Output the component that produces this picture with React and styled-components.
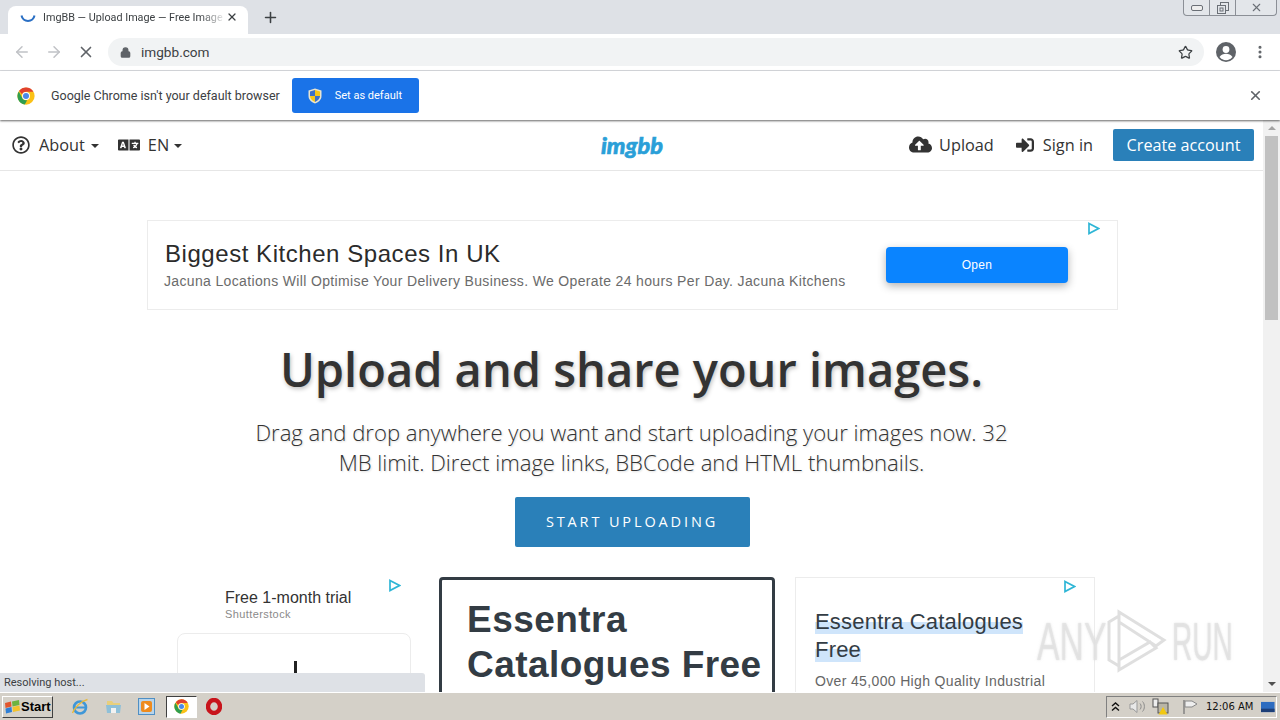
import React from "react";
import styled, { createGlobalStyle } from "styled-components";
import { FaRegQuestionCircle, FaLanguage, FaCloudUploadAlt, FaSignInAlt } from "react-icons/fa";
import { ArrowLeft, ArrowRight, X, Plus, Star, MoreVertical, Lock } from "lucide-react";

const GlobalStyle = createGlobalStyle`
  html, body { margin: 0; padding: 0; height: 720px; overflow: hidden; background: #fff; }
  * { box-sizing: border-box; }
  body { font-family: "Open Sans", sans-serif; color: #333; }
`;

const Screen = styled.div`
  position: relative;
  width: 1280px;
  height: 720px;
  display: flex;
  flex-direction: column;
  overflow: hidden;
`;

const TabStrip = styled.div`
  height: 34px;
  flex: none;
  background: #dee1e6;
  display: flex;
  align-items: flex-end;
  padding-left: 8px;
`;

const Tab = styled.div`
  width: 240px;
  height: 28px;
  background: #fff;
  border-radius: 8px 8px 0 0;
  display: flex;
  align-items: center;
  padding: 0 10px 6px 12px;
  color: #3c4043;
  font: 10.8px "Roboto", sans-serif;
`;

const TabTitle = styled.span`
  flex: 1;
  margin-left: 7px;
  white-space: nowrap;
  overflow: hidden;
  -webkit-mask-image: linear-gradient(to right, #000 86%, transparent);
  mask-image: linear-gradient(to right, #000 86%, transparent);
`;

const NewTab = styled.div`
  margin: 0 0 4px 14px;
  height: 26px;
  display: flex;
  align-items: center;
  color: #3c4043;
`;

const WindowControls = styled.div`
  margin: 0 3px 18px auto;
  align-self: flex-start;
  width: 94px;
  height: 16px;
  display: flex;
  border: 1px solid #8b8f96;
  border-top: none;
  border-radius: 0 0 4px 4px;
  background: #e3e6ea;
`;

const WindowButton = styled.div`
  flex: ${(p) => p.$grow || 1};
  display: flex;
  align-items: center;
  justify-content: center;
  border-left: ${(p) => (p.$first ? "none" : "1px solid #8b8f96")};
  color: #6a6f76;
`;

const Toolbar = styled.div`
  height: 37px;
  flex: none;
  background: #fff;
  border-bottom: 1px solid #dadce0;
  display: flex;
  align-items: center;
  padding: 0 12px 0 13px;
`;

const NavIcon = styled.div`
  width: ${(p) => p.$w || 32}px;
  display: flex;
  color: ${(p) => p.$color || "#c0c2c6"};
`;

const Omnibox = styled.div`
  flex: 1;
  height: 28px;
  margin-left: 5px;
  background: #f1f3f4;
  border-radius: 14px;
  display: flex;
  align-items: center;
  padding: 0 11px 0 12px;
  font: 13.6px "Roboto", sans-serif;
  color: #3c4043;
`;

const UrlText = styled.span`
  flex: 1;
  margin-left: 10px;
`;

const ToolbarRight = styled.div`
  display: flex;
  align-items: center;
  gap: 16px;
  margin-left: 12px;
  color: #5f6368;
`;

const InfoBar = styled.div`
  height: 49px;
  flex: none;
  background: #fff;
  display: flex;
  align-items: center;
  padding: 0 17px 0 17px;
  position: relative;
  z-index: 2;
  box-shadow: 0 1px 2px rgba(0, 0, 0, 0.6);
`;

const InfoText = styled.span`
  margin-left: 16px;
  font: 12.5px "Roboto", sans-serif;
  color: #3c4043;
  white-space: nowrap;
`;

const DefaultButton = styled.div`
  margin-left: 12px;
  width: 127px;
  height: 35px;
  background: #1a73e8;
  border-radius: 3px;
  display: flex;
  align-items: center;
  padding-left: 16px;
  gap: 13px;
  color: #fff;
  font: 11px "Roboto", sans-serif;
`;

const InfoClose = styled.div`
  margin-left: auto;
  display: flex;
  color: #5f6368;
`;

const Viewport = styled.div`
  flex: 1;
  min-height: 0;
  display: flex;
  overflow: hidden;
`;

const Page = styled.div`
  flex: 1;
  min-width: 0;
  overflow: hidden;
  display: flex;
  flex-direction: column;
  align-items: center;
`;

const TopBar = styled.div`
  width: 100%;
  height: 51px;
  flex: none;
  border-bottom: 1px solid #e6e6e6;
  display: grid;
  grid-template-columns: 1fr auto 1fr;
  align-items: center;
  padding: 0 9px 1px 12px;
`;

const BarGroup = styled.div`
  display: flex;
  align-items: center;
  gap: ${(p) => p.$gap}px;
  justify-content: ${(p) => (p.$end ? "flex-end" : "flex-start")};
`;

const BarItem = styled.div`
  display: flex;
  align-items: center;
  gap: ${(p) => p.$gap || 9}px;
  font-size: 16.3px;
  color: #333;
  white-space: nowrap;
`;

const Caret = styled.span`
  width: 0;
  height: 0;
  margin-left: -3px;
  margin-top: 2px;
  border-left: 4px solid transparent;
  border-right: 4px solid transparent;
  border-top: 4px solid #333;
`;

const Logo = styled.div`
  font: italic 900 23.5px "Lato", sans-serif;
  -webkit-text-stroke: 0.6px #2a9fd8;
  color: #2a9fd8;
  margin-left: -2px;
`;

const AccountButton = styled.div`
  width: 141px;
  height: 32px;
  margin-left: -2px;
  background: #2a80b9;
  border-radius: 2px;
  color: #fff;
  font-size: 16.2px;
  display: flex;
  align-items: center;
  justify-content: center;
`;

const Banner = styled.div`
  position: relative;
  width: 971px;
  height: 90px;
  flex: none;
  margin: 49px 0 0 2px;
  border: 1px solid #ececec;
  display: flex;
  align-items: center;
  padding: 0 49px 0 16px;
  font-family: "Liberation Sans", sans-serif;
`;

const BannerText = styled.div`
  flex: 1;
  min-width: 0;
  margin-top: -2px;
`;

const BannerTitle = styled.div`
  font-size: 24px;
  line-height: 30px;
  color: #2b2b2b;
  letter-spacing: 0.55px;
  margin-left: 1px;
`;

const BannerLine = styled.div`
  margin-top: 3px;
  font-size: 14px;
  line-height: 18px;
  color: #6b6b6b;
  letter-spacing: 0.35px;
  white-space: nowrap;
`;

const OpenButton = styled.div`
  width: 182px;
  height: 36px;
  background: #0a84ff;
  border-radius: 4px;
  color: #fff;
  font-size: 12px;
  letter-spacing: 0.3px;
  display: flex;
  align-items: center;
  justify-content: center;
  box-shadow: 0 3px 8px rgba(0, 0, 0, 0.3);
`;

const AdMark = styled.svg`
  position: absolute;
  top: ${(p) => p.$top}px;
  right: ${(p) => p.$right}px;
`;

const Headline = styled.h1`
  margin: 31px 0 0;
  font-size: 47px;
  line-height: 56px;
  font-weight: 600;
  color: #333;
  white-space: nowrap;
  text-shadow: 1px 2px 4px rgba(0, 0, 0, 0.25);
`;

const Lead = styled.p`
  margin: 20px 0 0;
  width: 770px;
  text-align: center;
  font-size: 22.1px;
  line-height: 30px;
  font-weight: 300;
  color: #333;
  text-shadow: 1px 1px 2px rgba(0, 0, 0, 0.15);
`;

const StartButton = styled.div`
  width: 235px;
  height: 50px;
  flex: none;
  margin: 20px 0 0 1px;
  padding-bottom: 2px;
  background: #2a80b9;
  border-radius: 2px;
  color: #fff;
  font-size: 14.5px;
  letter-spacing: 2.87px;
  display: flex;
  align-items: center;
  justify-content: center;
`;

const AdRow = styled.div`
  margin-top: 30px;
  align-self: flex-start;
  margin-left: 177px;
  display: flex;
  font-family: "Liberation Sans", sans-serif;
`;

const SideAd = styled.div`
  position: relative;
  width: 234px;
  padding-top: 11px;
`;

const TrialTitle = styled.div`
  margin-left: 48px;
  font-size: 16px;
  line-height: 19px;
  color: #333;
`;

const TrialBrand = styled.div`
  margin-left: 48px;
  font-size: 11px;
  line-height: 14px;
  color: #8a8a8a;
  letter-spacing: 0.4px;
`;

const TrialCard = styled.div`
  margin-top: 12px;
  height: 60px;
  border: 1px solid #ececec;
  border-radius: 8px 8px 0 0;
  display: flex;
  justify-content: center;
  padding: 27px 0 0 3px;
`;

const TrialTick = styled.span`
  width: 3px;
  height: 14px;
  background: #222;
`;

const CenterAd = styled.div`
  width: 336px;
  height: 140px;
  margin-left: 28px;
  border: 3px solid #333c44;
  border-radius: 4px;
  padding: 17px 0 0 25px;
  font-size: 37px;
  line-height: 45px;
  font-weight: 700;
  color: #333c44;
  letter-spacing: 0.45px;
`;

const RightAd = styled.div`
  position: relative;
  width: 300px;
  height: 140px;
  margin-left: 20px;
  border: 1px solid #ececec;
  padding: 30px 0 0 19px;
`;

const RightTitle = styled.div`
  width: 230px;
  font-size: 22px;
  line-height: 28px;
  color: #333c44;
  letter-spacing: 0.2px;
`;

const Highlight = styled.span`
  background: linear-gradient(to bottom, transparent 50%, #cfe5fb 50%);
`;

const RightLine = styled.div`
  margin-top: 8px;
  font-size: 14px;
  line-height: 18px;
  color: #666;
  letter-spacing: 0.35px;
  white-space: nowrap;
`;

const Scrollbar = styled.div`
  width: 17px;
  flex: none;
  background: #f1f1f1;
  display: flex;
  flex-direction: column;
  align-items: center;
`;

const ScrollArrow = styled.div`
  height: 16px;
  flex: none;
  display: flex;
  align-items: center;
  justify-content: center;
`;

const Thumb = styled.div`
  width: 13px;
  height: 184px;
  background: #c1c1c1;
`;

const ScrollGap = styled.div`
  flex: 1;
`;

const Triangle = styled.span`
  width: 0;
  height: 0;
  border-left: 4px solid transparent;
  border-right: 4px solid transparent;
  ${(p) => (p.$up ? "border-bottom: 4px solid #a3a3a3;" : "border-top: 4px solid #505050;")}
`;

const StatusBubble = styled.div`
  position: absolute;
  left: 0;
  bottom: 28px;
  width: 425px;
  height: 19px;
  background: #dee1e6;
  border-radius: 0 3px 0 0;
  padding-left: 4px;
  font: 11px/20px "Roboto", sans-serif;
  color: #3c4043;
  z-index: 3;
`;

const Watermark = styled.div`
  position: absolute;
  left: 1037px;
  top: 608px;
  height: 66px;
  display: flex;
  align-items: center;
  gap: 4px;
  color: rgba(226, 226, 226, 0.75);
  font: 400 54px/1 "Liberation Sans", sans-serif;
  text-shadow: 0 0 3px rgba(205, 205, 205, 0.6);
  z-index: 2;
`;

const WatermarkWord = styled.span`
  display: inline-block;
  transform: scaleX(${(p) => p.$scale});
  transform-origin: left;
  width: ${(p) => p.$w}px;
  white-space: nowrap;
`;

const Taskbar = styled.div`
  height: 28px;
  flex: none;
  background: #d4d0c8;
  border-top: 1px solid #fff;
  display: flex;
  align-items: center;
  padding: 0 3px 0 2px;
  position: relative;
  z-index: 4;
`;

const StartBtn = styled.div`
  width: 51px;
  height: 22px;
  background: #d4d0c8;
  border: 1px solid;
  border-color: #fff #404040 #404040 #fff;
  display: flex;
  align-items: center;
  padding-left: 1px;
  gap: 0;
  font: 700 13px "Liberation Sans", sans-serif;
  color: #000;
`;

const TaskIcons = styled.div`
  display: flex;
  align-items: center;
  margin-left: 18px;
  gap: 16px;
`;

const ActiveTask = styled.div`
  width: 31px;
  height: 22px;
  margin: 0 -7px 0 -5px;
  background: #fff;
  border: 1px solid;
  border-color: #404040 #fff #fff #404040;
  display: flex;
  align-items: center;
  justify-content: center;
`;

const Tray = styled.div`
  margin-left: auto;
  width: 171px;
  height: 22px;
  border: 1px solid;
  border-color: #808080 #fff #fff #808080;
  display: flex;
  align-items: center;
  padding: 0 1px 0 4px;
  font: 11px "Liberation Sans", sans-serif;
  color: #111;
`;

const TrayClock = styled.span`
  margin-left: 7px;
  white-space: nowrap;
  font-family: "DejaVu Sans", sans-serif;
  font-size: 10px;
`;

const ChromeLogo = ({ size = 18 }) => (
  <svg width={size} height={size} viewBox="0 0 48 48">
    <circle cx="24" cy="24" r="23" fill="#fbc116" />
    <path d="M24 1a23 23 0 0 1 19.9 11.5H24a11.5 11.5 0 0 0-10.6 7L5.6 10.2A23 23 0 0 1 24 1z" fill="#e0412f" />
    <path d="M4.6 12 14.5 30A11.5 11.5 0 0 0 27 35l-6.2 11.8A23 23 0 0 1 4.6 12z" fill="#2f9e4f" />
    <circle cx="24" cy="24" r="10.5" fill="#fff" />
    <circle cx="24" cy="24" r="8" fill="#4a89e8" />
  </svg>
);

const Spinner = () => (
  <svg width="16" height="16" viewBox="0 0 16 16">
    <path d="M1.5 6.5A6.6 6.6 0 0 0 14.5 6.5" fill="none" stroke="#2a6fc4" strokeWidth="2" />
  </svg>
);

const Shield = () => (
  <svg width="14" height="16" viewBox="0 0 14 16">
    <path d="M7 .5 13.5 2.5V8c0 4-3.5 6.5-6.5 7.5C4 14.5.5 12 .5 8V2.5Z" fill="#e8e4d0" />
    <path d="M7 2 12 3.5V8H7Z" fill="#f5c518" />
    <path d="M7 2 2 3.5V8H7Z" fill="#3b6fc9" />
    <path d="M7 8H12C12 11 9 13 7 14Z" fill="#3b6fc9" />
    <path d="M7 8H2C2 11 5 13 7 14Z" fill="#f5c518" />
  </svg>
);

const Account = () => (
  <svg width="20" height="20" viewBox="0 0 20 20">
    <circle cx="10" cy="10" r="10" fill="#5f6368" />
    <circle cx="10" cy="7.5" r="3.4" fill="#fff" />
    <path d="M3.5 15c1.5-2.5 4-3.3 6.5-3.3s5 .8 6.5 3.3a8.2 8.2 0 0 1-13 0Z" fill="#fff" />
  </svg>
);

const WinFlag = () => (
  <svg width="17" height="16" viewBox="0 0 17 16">
    <path d="M1 4 7 2.5 7.5 7.5 1.5 9Z" fill="#e2562d" />
    <path d="M8 2.5 15 1 15.5 6 8.5 7.5Z" fill="#6cb33f" />
    <path d="M1.5 9.5 7.5 8 8 13 2 14.5Z" fill="#2f7fd6" />
    <path d="M8.5 8 15.5 6.5 16 11.5 9 13Z" fill="#f3c22b" />
  </svg>
);

const IeIcon = () => (
  <svg width="18" height="18" viewBox="0 0 18 18">
    <circle cx="9" cy="9.5" r="6" fill="none" stroke="#3f97d8" strokeWidth="2.6" />
    <path d="M3 9.5H15" stroke="#3f97d8" strokeWidth="2" />
    <path d="M1.5 15C3 10 10 3 16.5 1.5" fill="none" stroke="#e9b93a" strokeWidth="1.3" />
  </svg>
);

const FolderIcon = () => (
  <svg width="17" height="17" viewBox="0 0 17 17">
    <path d="M2 3H7L8.5 5H15V15H2Z" fill="#e8cf7c" />
    <path d="M1 7H16L15 15H2Z" fill="#8fc0d8" />
    <path d="M6 10H11V15H6Z" fill="#f2f2f2" />
  </svg>
);

const MediaIcon = () => (
  <svg width="17" height="17" viewBox="0 0 17 17">
    <rect x="0.5" y="0.5" width="16" height="16" fill="#b8d4ea" stroke="#4f8fc4" />
    <rect x="3" y="3" width="11" height="11" rx="2" fill="#ee8b1d" />
    <path d="M6.5 5 11.5 8.5 6.5 12Z" fill="#fff" />
  </svg>
);

const OperaIcon = () => (
  <svg width="16" height="17" viewBox="0 0 16 17">
    <ellipse cx="8" cy="8.5" rx="6" ry="6.5" fill="none" stroke="#c8141c" strokeWidth="4.4" />
  </svg>
);

const TrayIcon = styled.svg`
  margin-left: ${(p) => p.$left || 0}px;
  flex: none;
`;

const TrayIcons = () => (
  <>
    <TrayIcon width="9" height="11" viewBox="0 0 9 11">
      <path d="M1 5 4.5 2 8 5M1 9.5 4.5 6.5 8 9.5" fill="none" stroke="#111" strokeWidth="1.4" />
    </TrayIcon>
    <TrayIcon $left={9} width="17" height="15" viewBox="0 0 17 15">
      <path d="M1 5H4L8 1.5V13.5L4 10H1Z" fill="#e8e8e8" stroke="#999" />
      <path d="M11 4.5C12.5 6 12.5 9 11 10.5M13.5 2.5C16 5 16 10 13.5 12.5" fill="none" stroke="#8a8a8a" />
    </TrayIcon>
    <TrayIcon $left={6} width="17" height="17" viewBox="0 0 17 17">
      <rect x="1" y="1" width="5" height="8" fill="#eee" stroke="#555" />
      <rect x="6" y="5" width="10" height="10" fill="#b9b5a6" stroke="#555" />
      <path d="M11 9 15.5 16.5H6.5Z" fill="#f2c811" />
    </TrayIcon>
    <TrayIcon $left={13} width="17" height="16" viewBox="0 0 17 16">
      <path d="M2 1V15" stroke="#777" strokeWidth="1.3" />
      <path d="M3 2H10L15 5 10 8H3Z" fill="#eee" stroke="#888" />
    </TrayIcon>
  </>
);

const AdPlay = ({ top, right }) => (
  <AdMark $top={top} $right={right} width="13" height="13" viewBox="0 0 13 13">
    <path d="M2 1.5 11.5 6.5 2 11.5Z" fill="none" stroke="#2fb6d6" strokeWidth="1.7" />
  </AdMark>
);

export default function App() {
  return (
    <Screen>
      <GlobalStyle />
      <TabStrip>
        <Tab>
          <Spinner />
          <TabTitle>ImgBB — Upload Image — Free Image Hosting</TabTitle>
          <X size={12} strokeWidth={2.5} color="#3c4043" />
        </Tab>
        <NewTab>
          <Plus size={17} strokeWidth={2.2} />
        </NewTab>
        <WindowControls>
          <WindowButton $first>
            <svg width="12" height="6" viewBox="0 0 12 6">
              <rect x="0.5" y="0.5" width="11" height="5" rx="1.5" fill="#eee" stroke="#6a6f76" />
            </svg>
          </WindowButton>
          <WindowButton>
            <svg width="12" height="12" viewBox="0 0 12 12">
              <rect x="3.5" y="0.5" width="8" height="8" fill="none" stroke="#6a6f76" />
              <rect x="0.5" y="3.5" width="8" height="8" fill="#e3e6ea" stroke="#6a6f76" />
              <rect x="3" y="6" width="3" height="3" fill="none" stroke="#6a6f76" />
            </svg>
          </WindowButton>
          <WindowButton $grow={1.6}>
            <X size={13} strokeWidth={2} />
          </WindowButton>
        </WindowControls>
      </TabStrip>

      <Toolbar>
        <NavIcon>
          <ArrowLeft size={18} strokeWidth={2} />
        </NavIcon>
        <NavIcon>
          <ArrowRight size={18} strokeWidth={2} />
        </NavIcon>
        <NavIcon $w={26} $color="#5f6368">
          <X size={18} strokeWidth={2.2} />
        </NavIcon>
        <Omnibox>
          <Lock size={11} strokeWidth={3} color="#5f6368" fill="#5f6368" />
          <UrlText>imgbb.com</UrlText>
          <Star size={15} strokeWidth={2} color="#3c4043" />
        </Omnibox>
        <ToolbarRight>
          <Account />
          <MoreVertical size={16} strokeWidth={2.6} />
        </ToolbarRight>
      </Toolbar>

      <InfoBar>
        <ChromeLogo />
        <InfoText>Google Chrome isn't your default browser</InfoText>
        <DefaultButton>
          <Shield />
          Set as default
        </DefaultButton>
        <InfoClose>
          <X size={15} strokeWidth={2.6} />
        </InfoClose>
      </InfoBar>

      <Viewport>
        <Page>
          <TopBar>
            <BarGroup $gap={19}>
              <BarItem>
                <FaRegQuestionCircle size={18} />
                About
                <Caret />
              </BarItem>
              <BarItem $gap={8}>
                <FaLanguage size={22} />
                EN
                <Caret />
              </BarItem>
            </BarGroup>
            <Logo>imgbb</Logo>
            <BarGroup $gap={22} $end>
              <BarItem $gap={7}>
                <FaCloudUploadAlt size={23} />
                Upload
              </BarItem>
              <BarItem>
                <FaSignInAlt size={18} />
                Sign in
              </BarItem>
              <AccountButton>Create account</AccountButton>
            </BarGroup>
          </TopBar>

          <Banner>
            <AdPlay top={1} right={17} />
            <BannerText>
              <BannerTitle>Biggest Kitchen Spaces In UK</BannerTitle>
              <BannerLine>
                Jacuna Locations Will Optimise Your Delivery Business. We Operate 24 hours Per Day. Jacuna Kitchens
              </BannerLine>
            </BannerText>
            <OpenButton>Open</OpenButton>
          </Banner>

          <Headline>Upload and share your images.</Headline>
          <Lead>
            Drag and drop anywhere you want and start uploading your images now. 32 MB limit. Direct image links,
            BBCode and HTML thumbnails.
          </Lead>
          <StartButton>START UPLOADING</StartButton>

          <AdRow>
            <SideAd>
              <AdPlay top={2} right={10} />
              <TrialTitle>Free 1-month trial</TrialTitle>
              <TrialBrand>Shutterstock</TrialBrand>
              <TrialCard>
                <TrialTick />
              </TrialCard>
            </SideAd>
            <CenterAd>
              Essentra
              <br />
              Catalogues Free
            </CenterAd>
            <RightAd>
              <AdPlay top={2} right={18} />
              <RightTitle>
                <Highlight>Essentra Catalogues Free</Highlight>
              </RightTitle>
              <RightLine>Over 45,000 High Quality Industrial</RightLine>
            </RightAd>
          </AdRow>
        </Page>
        <Scrollbar>
          <ScrollArrow>
            <Triangle $up />
          </ScrollArrow>
          <Thumb />
          <ScrollGap />
          <ScrollArrow>
            <Triangle />
          </ScrollArrow>
        </Scrollbar>
      </Viewport>

      <StatusBubble>Resolving host...</StatusBubble>

      <Watermark>
        <WatermarkWord $w={65} $scale={0.625}>ANY</WatermarkWord>
        <svg width="62" height="66" viewBox="0 0 62 66">
          <path d="M3 14 13 8V58L3 52ZM13 4 58 32 50 38 13 14ZM13 62 50 40 44 34 13 52Z" fill="none" stroke="rgba(215,215,215,0.8)" strokeWidth="3" />
        </svg>
        <WatermarkWord $w={62} $scale={0.52}>RUN</WatermarkWord>
      </Watermark>

      <Taskbar>
        <StartBtn>
          <WinFlag />
          Start
        </StartBtn>
        <TaskIcons>
          <IeIcon />
          <FolderIcon />
          <MediaIcon />
          <ActiveTask>
            <ChromeLogo size={15} />
          </ActiveTask>
          <OperaIcon />
        </TaskIcons>
        <Tray>
          <TrayIcons />
          <TrayClock>12:06 AM</TrayClock>
          <svg width="16" height="12" viewBox="0 0 16 12" style={{ marginLeft: 8 }}>
            <rect width="16" height="12" fill="#2d6cc0" />
            <rect y="8" width="16" height="4" fill="#1d3f78" />
          </svg>
        </Tray>
      </Taskbar>
    </Screen>
  );
}
